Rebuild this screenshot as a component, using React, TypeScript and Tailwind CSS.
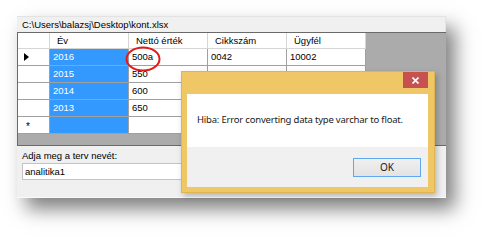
import React from "react";

const cols = ["Év", "Nettó érték", "Cikkszám", "Ügyfél"];
const rows = [
  ["2016", "500a", "0042", "10002"],
  ["2015", "550", "", ""],
  ["2014", "600", "", ""],
  ["2013", "650", "", ""],
];

function Cell({ children, blue }: { children?: React.ReactNode; blue?: boolean }) {
  return (
    <div
      className={`w-[79px] h-[17px] border-r border-b border-[#a0a0a0] pl-[3px] leading-[16px] ${
        blue ? "bg-[#3399ff] text-white" : "bg-white text-black"
      }`}
    >
      {children}
    </div>
  );
}

export default function App() {
  return (
    <div className="relative w-[490px] h-[241px] bg-white overflow-hidden pt-[16px] pl-[17px] font-['Liberation_Sans',Arial,sans-serif]">
      {/* main window */}
      <div className="w-[429px] h-[182px] bg-[#f0f0f0] flex flex-col shadow-[9px_11px_18px_rgba(0,0,0,0.5)] border-b border-[#fafafa]">
        <div className="h-[16px] pl-[5px] text-[9.5px] leading-[16px] text-black border-t border-r border-[#e3e3e3]">
          C:\Users\balazsj\Desktop\kont.xlsx
        </div>
        <div className="h-[114px] flex border-y border-l border-[#6a6a6a] bg-[#ababab] text-[9.5px]">
          <div className="flex flex-col">
            {/* header */}
            <div className="flex h-[16px]">
              <div className="w-[32px] h-[16px] bg-white border-r border-b border-[#d5d5d5]" />
              {cols.map((c) => (
                <div
                  key={c}
                  className="w-[79px] h-[16px] bg-white border-r border-b border-[#d5d5d5] pl-[7px] leading-[16px] text-black"
                >
                  {c}
                </div>
              ))}
            </div>
            {rows.map((r, i) => (
              <div key={i} className="flex">
                <div className="w-[32px] h-[17px] bg-white border-r border-b border-[#a0a0a0] flex items-center pl-[6px]">
                  {i === 0 && (
                    <svg width="5" height="8" viewBox="0 0 5 8">
                      <path d="M0 0 L5 4 L0 8 Z" fill="#000" />
                    </svg>
                  )}
                </div>
                <Cell blue>{r[0]}</Cell>
                <Cell>{r[1]}</Cell>
                <Cell>{r[2]}</Cell>
                <Cell>{r[3]}</Cell>
              </div>
            ))}
            <div className="flex">
              <div className="w-[32px] h-[17px] bg-white border-r border-b border-[#a0a0a0] pl-[8px] leading-[19px] text-[10px]">
                *
              </div>
              <Cell blue />
              <Cell />
              <Cell />
              <Cell />
            </div>
          </div>
        </div>
        <div className="flex flex-col pl-[5px] pt-[4px]">
          <div className="text-[9.5px] leading-[12px] text-black">Adja meg a terv nevét:</div>
          <div className="mt-[1px] w-[300px] h-[17px] bg-white border border-[#c4c4c4] pl-[2px] text-[9.5px] leading-[15px] text-black">
            analitika1
          </div>
        </div>
      </div>

      {/* red annotation ellipse */}
      <svg className="absolute left-[125px] top-[46px]" width="36" height="26" viewBox="0 0 36 26">
        <ellipse cx="18" cy="13" rx="16.5" ry="11.5" fill="none" stroke="#e21b1b" strokeWidth="2" />
      </svg>

      {/* dialog */}
      <div className="absolute left-[181px] top-[71px] w-[254px] h-[122px] bg-[#f0c766] border border-[#e0b550] flex flex-col pl-[5px] pr-[6px] pb-[5px] shadow-[2px_3px_6px_rgba(0,0,0,0.25)]">
        <div className="h-[22px] flex justify-end items-start">
          <div className="w-[25px] h-[16px] bg-[#c75050] flex items-center justify-center">
            <svg width="7" height="7" viewBox="0 0 7 7">
              <path d="M0.5 0.5 L6.5 6.5 M6.5 0.5 L0.5 6.5" stroke="#fff" strokeWidth="1.6" />
            </svg>
          </div>
        </div>
        <div className="flex-1 flex flex-col font-['Noto_Sans',sans-serif]">
          <div className="h-[53px] bg-white pl-[10px] pt-[19px] text-[9.5px] leading-[14px] text-[#1a1a1a] tracking-[-0.2px]">
            Hiba: Error converting data type varchar to float.
          </div>
          <div className="flex-1 bg-[#f0f0f0] flex justify-end items-start pt-[11px] pr-[7px]">
            <div className="w-[68px] h-[19px] border border-[#5fa8ef] bg-gradient-to-b from-[#f0f0f0] to-[#e3e3e3] flex items-center justify-center text-[10px] text-[#1a1a1a]">
              OK
            </div>
          </div>
        </div>
      </div>
    </div>
  );
}
